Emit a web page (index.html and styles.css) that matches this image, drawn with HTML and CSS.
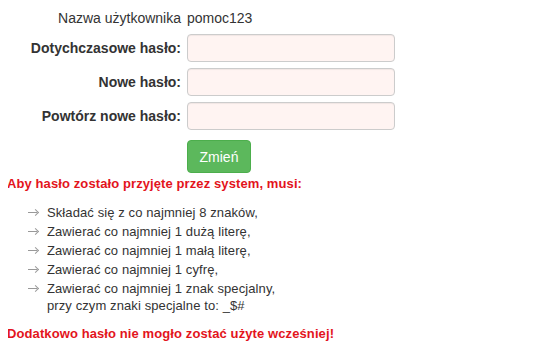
FILE: index.html
```html
<!DOCTYPE html>
<html lang="pl">
<head>
  <meta charset="UTF-8">
  <title>Zmiana hasła</title>
  <link rel="stylesheet" href="styles.css">
</head>
<body>

  <form class="pass-form">
    <div class="label plain">Nazwa użytkownika</div>
    <div class="value">pomoc123</div>

    <label class="label" for="old-pass">Dotychczasowe hasło:</label>
    <input type="password" id="old-pass" class="field">

    <label class="label" for="new-pass">Nowe hasło:</label>
    <input type="password" id="new-pass" class="field">

    <label class="label" for="new-pass2">Powtórz nowe hasło:</label>
    <input type="password" id="new-pass2" class="field">

    <div></div>
    <div><button type="button" class="btn">Zmień</button></div>
  </form>

  <p class="warn">Aby hasło zostało przyjęte przez system, musi:</p>

  <ul class="rules">
    <li>Składać się z co najmniej 8 znaków,</li>
    <li>Zawierać co najmniej 1 dużą literę,</li>
    <li>Zawierać co najmniej 1 małą literę,</li>
    <li>Zawierać co najmniej 1 cyfrę,</li>
    <li>Zawierać co najmniej 1 znak specjalny,<br>przy czym znaki specjalne to: _$#</li>
  </ul>

  <p class="warn">Dodatkowo hasło nie mogło zostać użyte wcześniej!</p>

</body>
</html>
```

FILE: styles.css
```css
body {
  font-family: 'Liberation Sans', Arial, sans-serif;
  font-size: 13px;
  color: #333;
  margin: 8px;
  background: #fff;
}

.pass-form {
  display: grid;
  grid-template-columns: 173px 208px;
  column-gap: 6px;
  row-gap: 6px;
  align-items: center;
}

.label {
  text-align: right;
  font-weight: bold;
  font-size: 14px;
}

.label.plain {
  font-weight: normal;
}

.value,
.plain {
  font-size: 14px;
  line-height: 20px;
}

.field {
  box-sizing: border-box;
  width: 208px;
  height: 28px;
  margin: 0;
  border: 1px solid #ccc;
  border-radius: 4px;
  background: #fff4f2;
  box-shadow: inset 0 1px 1px rgba(0, 0, 0, 0.06);
}

.btn {
  margin-top: 4px;
  width: 64px;
  height: 33px;
  background: #5cb85c;
  border: 1px solid #4cae4c;
  border-radius: 4px;
  color: #fff;
  font-family: 'Liberation Sans', Arial, sans-serif;
  font-size: 14px;
  cursor: pointer;
}

.warn {
  color: #e3141c;
  font-weight: bold;
  margin: 3px 0 0 -1px;
  line-height: 16px;
  letter-spacing: 0.1px;
}

.rules {
  list-style: none;
  margin: 12px 0 12px;
  padding: 0 0 0 39px;
  letter-spacing: 0.1px;
}

.rules li {
  position: relative;
  line-height: 17px;
  margin-bottom: 2px;
}

/* strzałka przed punktem listy */
.rules li::before {
  content: "";
  position: absolute;
  left: -19px;
  top: 8px;
  width: 9px;
  height: 1px;
  background: #999;
}

.rules li::after {
  content: "";
  position: absolute;
  left: -14px;
  top: 6px;
  width: 4px;
  height: 4px;
  border-top: 1px solid #999;
  border-right: 1px solid #999;
  transform: rotate(45deg);
}
```
